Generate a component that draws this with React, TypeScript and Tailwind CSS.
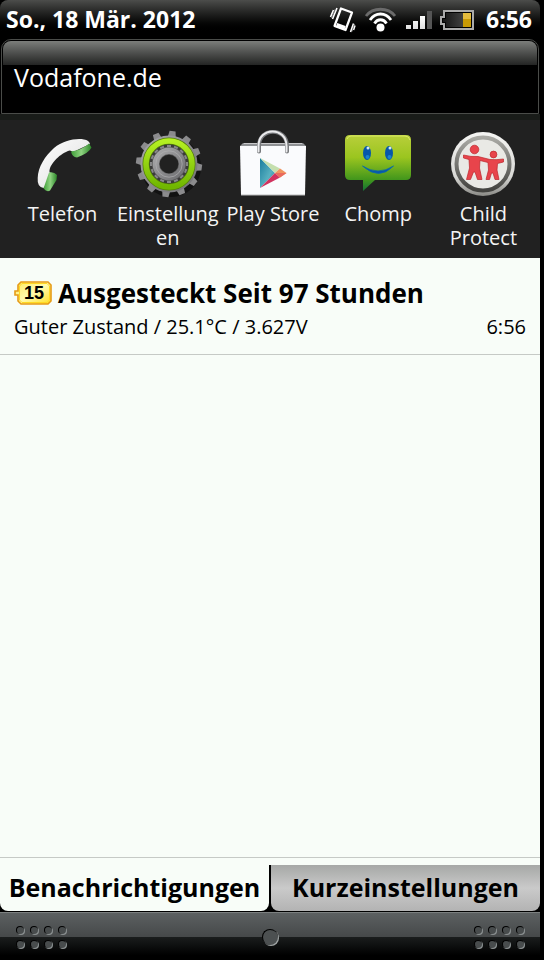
import type { ReactNode } from "react";

function VibrateIcon() {
  return (
    <svg width="28" height="28" viewBox="0 0 28 28" fill="none" stroke="#fff" aria-hidden="true">
      <path d="M13 2.500 24 6.500 17.500 24 6.500 20Z" strokeWidth="2.200" strokeLinejoin="round" />
      <path d="M8.500 19 17 22" strokeWidth="4" />
      <path d="M9 2 4.500 13M5.500 4 2.500 11M22.500 26 25.500 17.500M25.500 24 27 19.500" strokeWidth="1.600" />
      <path d="M7.300 3 3.500 12M24 25.500 26.500 18" stroke="#999" strokeWidth=".8" />
    </svg>
  );
}

function WifiIcon() {
  return (
    <svg width="32" height="28" viewBox="0 0 32 28" fill="none" strokeWidth="2.800" aria-hidden="true">
      <path d="M2 10C9 1 24 1 31 10" stroke="#6b6b6b" />
      <path d="M6 14C11.500 6 21.500 6 27 14" stroke="#fff" />
      <path d="M10.500 17.500C13.500 12.500 19.500 12.500 22.500 17.500" stroke="#fff" />
      <circle cx="16.500" cy="21.500" r="4" fill="#fff" />
    </svg>
  );
}

function SignalIcon() {
  return (
    <svg width="28" height="20" viewBox="0 0 28 20" aria-hidden="true">
      <defs>
        <linearGradient id="bars" x1="0" y1="0" x2="0" y2="1">
          <stop offset="0" stopColor="#fff" />
          <stop offset="1" stopColor="#ddd" />
        </linearGradient>
      </defs>
      <path d="M2 15h5v4H2zM9 11h5v8H9zM16 6h5v13h-5z" fill="url(#bars)" />
      <path d="M23 1h5v18h-5z" fill="#555" />
    </svg>
  );
}

function BatteryIcon() {
  return (
    <svg width="34" height="20" viewBox="0 0 34 20" aria-hidden="true">
      <defs>
        <linearGradient id="cell" x1="0" y1="0" x2="1" y2="0">
          <stop offset="0" stopColor="#111" />
          <stop offset="1" stopColor="#555" />
        </linearGradient>
      </defs>
      <path d="M4 1h29v18H4v-5H1V7h3z" fill="url(#cell)" stroke="#aaa" strokeWidth="2" />
      <path d="M5.500 2.500h26v15h-26v-5h-3v-4h3z" fill="none" stroke="#000" />
      <path d="M23 3h8v14h-8z" fill="#c89a05" />
      <path d="M23 3h8v6h-8z" fill="#e3bb3d" />
    </svg>
  );
}

function PhoneIcon() {
  return (
    <svg width="72" height="68" viewBox="0 0 72 68" aria-hidden="true">
      <defs>
        <linearGradient id="handle" x1="0" y1="0" x2="1" y2="1">
          <stop offset="0" stopColor="#fff" />
          <stop offset="1" stopColor="#dcdcdc" />
        </linearGradient>
        <linearGradient id="pad" x1="0" y1="0" x2="1" y2="0">
          <stop offset="0" stopColor="#3f9e38" />
          <stop offset=".5" stopColor="#8fd381" />
          <stop offset="1" stopColor="#2b8628" />
        </linearGradient>
      </defs>
      <path d="M16.500 58Q10 57 10.700 48C11 37 18 26 27 18 36 11 48 8 57 9.500Q62 10 63 14L46 22Q43 19 39 22C30 26 21 37 22.700 42.500L29 45Z" fill="url(#handle)" />
      <path d="M22 42.500Q27 41.500 30 45L29.500 50 23 60.500Q20 62.500 16.500 58.500Z" fill="url(#pad)" />
      <path d="M44 21.500Q55 20 62 13.500L64.500 17.500Q62 23 50 27.500Q45 27 44 21.500Z" fill="url(#pad)" />
    </svg>
  );
}

function GearIcon() {
  const teeth = Array.from({ length: 12 }, (_, i) => i * 30 + 8);
  const notches = Array.from({ length: 16 }, (_, i) => i * 22.5);
  return (
    <svg width="72" height="68" viewBox="0 0 72 68" aria-hidden="true">
      <defs>
        <linearGradient id="steel" x1="0" y1="0" x2="1" y2="1">
          <stop offset="0" stopColor="#a8a8aa" />
          <stop offset="1" stopColor="#707073" />
        </linearGradient>
        <linearGradient id="lime" x1="0" y1="0" x2="0" y2="1">
          <stop offset="0" stopColor="#b5ef22" />
          <stop offset="1" stopColor="#70b600" />
        </linearGradient>
      </defs>
      <circle cx="39" cy="37" r="30" fill="#121212" />
      {teeth.map((a) => (
        <path key={a} d="M32 7 33 1h6l1 6z" fill="#8b8b8d" transform={`rotate(${a} 37 34)`} />
      ))}
      <circle cx="37" cy="34" r="28.500" fill="url(#steel)" />
      <circle cx="37" cy="34" r="23" fill="#3a3a3a" stroke="#547f0b" strokeWidth="7" />
      <circle cx="37" cy="34" r="23" fill="none" stroke="url(#lime)" strokeWidth="5.500" />
      {notches.map((a) => (
        <path key={a} d="M35 15h4v4h-4z" fill="#88888a" transform={`rotate(${a} 37 34)`} />
      ))}
      <circle cx="37" cy="34" r="13.200" fill="#212121" stroke="#555" strokeWidth="7.800" />
      <circle cx="37" cy="34" r="13.200" fill="none" stroke="url(#steel)" strokeWidth="6.400" />
      <circle cx="37" cy="34" r="13.200" fill="none" stroke="#b0b0b2" strokeWidth=".7" />
    </svg>
  );
}

function StoreIcon() {
  return (
    <svg width="72" height="68" viewBox="0 0 72 68" aria-hidden="true">
      <defs>
        <linearGradient id="blue" x1="0" y1="0" x2="1" y2="1">
          <stop offset="0" stopColor="#197c9d" />
          <stop offset=".6" stopColor="#58b0c0" />
          <stop offset="1" stopColor="#2d7f9e" />
        </linearGradient>
      </defs>
      <path d="M6 13h60l3 3v4H3v-4z" fill="#8f9194" />
      <path d="M7 13.500h58" stroke="#c8c8ca" strokeWidth="1" />
      <path d="M3 16h66l-1 49H4z" fill="#fafbfd" />
      <path d="M4 65h64" stroke="#bbb" strokeWidth="1" />
      <path d="M22 21.500V16C22-3 50-3 50 16V21.500" fill="none" stroke="#77797c" strokeWidth="4" strokeLinecap="round" />
      <path d="M21.500 21.500V16C21.500-3.500 49.500-3.500 49.500 16V21.500" fill="none" stroke="#ececee" strokeWidth="2" strokeLinecap="round" />
      <path d="M23 28 38 43 23 58Z" fill="url(#blue)" />
      <path d="M23 28 43 38.500 38 43Z" fill="#c5dfae" />
      <path d="M23 58 38 43 43 47.500Z" fill="#d1325f" />
      <path d="M38 43 43 38.500 49.500 43 43 47.500Z" fill="#f0945f" />
      <path d="M38 43h11.500L43 47.500Z" fill="#ea6a5d" />
    </svg>
  );
}

function ChompIcon() {
  return (
    <svg width="72" height="68" viewBox="0 0 72 68" aria-hidden="true">
      <defs>
        <linearGradient id="bubble" x1="0" y1="0" x2="0" y2="1">
          <stop offset="0" stopColor="#b9cf3b" />
          <stop offset=".4" stopColor="#9bc51f" />
          <stop offset=".8" stopColor="#41961c" />
          <stop offset="1" stopColor="#147236" />
        </linearGradient>
      </defs>
      <path d="M8 5h56q5 0 5 5v35q0 5-5 5H33L21 61V50H8q-5 0-5-5V10q0-5 5-5z" fill="url(#bubble)" />
      <path d="M5 9q1-3 4-3h54q4 0 5 4" fill="none" stroke="#dce967" />
      <ellipse cx="25" cy="23" rx="4" ry="7" fill="#0757aa" />
      <ellipse cx="47" cy="23" rx="4" ry="7" fill="#0757aa" />
      <ellipse cx="25.500" cy="27" rx="2" ry="2" fill="#1b83cc" />
      <ellipse cx="47.500" cy="27" rx="2" ry="2" fill="#1b83cc" />
      <circle cx="26" cy="18" r="1.500" fill="#d5e8f0" />
      <circle cx="48" cy="18" r="1.500" fill="#d5e8f0" />
      <path d="M20.500 36Q36 46 51.500 36 37 51 20.500 36Z" fill="#0757aa" stroke="#0969a9" strokeWidth=".8" />
    </svg>
  );
}

function ChildProtectIcon() {
  return (
    <svg width="72" height="68" viewBox="0 0 72 68" aria-hidden="true">
      <defs>
        <linearGradient id="rim" x1="0" y1="0" x2="0" y2="1">
          <stop offset="0" stopColor="#f5f5f3" />
          <stop offset=".7" stopColor="#d8d8d5" />
          <stop offset="1" stopColor="#898985" />
        </linearGradient>
        <linearGradient id="band" x1="0" y1="0" x2="0" y2="1">
          <stop offset="0" stopColor="#aaaaa5" />
          <stop offset="1" stopColor="#42423f" />
        </linearGradient>
      </defs>
      <circle cx="36" cy="34" r="32" fill="url(#rim)" />
      <circle cx="36" cy="34" r="26.500" fill="#e9e9e5" stroke="url(#band)" strokeWidth="4" />
      <g fill="#e8444b" stroke="#bc252b" strokeWidth=".7" strokeLinejoin="round">
        <circle cx="27.500" cy="19.500" r="4.300" />
        <circle cx="46.500" cy="24.500" r="3.400" />
        <path d="M16.500 25Q24 27 31 26.500L43 29.500Q50 30 56.500 29V32L50.500 33.500 50 40 52 49.500H48L46 43 44.500 43 42.500 49.500H39L41.500 40 41 32.500 33 30.500 32.500 38 35 49.500H30.500L28 42 26.500 42 23.500 49.500H19.500L22.500 38 22 29.500 16.500 28Z" />
      </g>
    </svg>
  );
}

function BatteryBadge() {
  return (
    <svg width="38" height="24" viewBox="0 0 38 24" className="shrink-0" role="img" aria-label="15">
      <defs>
        <linearGradient id="badge" x1="0" y1="0" x2="1" y2="1">
          <stop offset="0" stopColor="#ffe860" />
          <stop offset=".5" stopColor="#fffbb0" />
          <stop offset="1" stopColor="#ffdf20" />
        </linearGradient>
      </defs>
      <path d="M1 10h3V4l3-3h27l3 3v16l-3 3H7l-3-3v-6H1z" fill="url(#badge)" stroke="#e69b16" strokeWidth="1.600" />
      <path d="M5.500 5 8 2.500h25L35.500 5v14L33 21.500H8L5.500 19z" fill="none" stroke="#ffd923" />
      <text x="20" y="18" textAnchor="middle" fontSize="18" fontWeight="700" fontFamily="Liberation Sans, Arial, sans-serif">15</text>
    </svg>
  );
}

function AppShortcut({ icon, label }: { icon: ReactNode; label: string }) {
  return (
    <button type="button" className="flex min-w-0 flex-1 flex-col items-center pt-2.5">
      {icon}
      <span className="mt-1 w-full text-center text-[20px] leading-6 break-words text-[#f4f4f4]">{label}</span>
    </button>
  );
}

function Grip() {
  return (
    <div className="grid grid-cols-4 gap-1.5" aria-hidden="true">
      {Array.from({ length: 8 }, (_, i) => (
        <span key={i} className="size-2 rounded-full border-t border-l border-black bg-[#484c4d] shadow-[1px_1px_0_#8b9091]" />
      ))}
    </div>
  );
}

export default function App() {
  return (
    <div className="min-h-screen bg-black pr-1 font-['Open_Sans','Noto_Sans',sans-serif]">
      <div className="flex min-h-screen flex-col bg-black">
        <header className="flex h-[39px] items-center rounded-t-lg bg-linear-to-b from-[#4c4d4b] to-black to-85% pr-2 pl-1.5 text-[23px] font-bold text-white">
          <span className="flex-1">So., 18 Mär. 2012</span>
          <div className="flex items-center gap-2">
            <VibrateIcon />
            <WifiIcon />
            <SignalIcon />
            <BatteryIcon />
            <span className="pl-1">6:56</span>
          </div>
        </header>

        <section className="mx-px h-[75px] rounded-t-[10px] border border-[#4a4c49] bg-black p-px">
          <div className="h-6 rounded-t-lg bg-linear-to-b from-[#7c7e7b] to-[#242524]" />
          <p className="px-[11px] text-[25px] leading-6 text-white">Vodafone.de</p>
        </section>
        <div className="h-1.5 bg-[#191c19]" />

        <nav className="flex h-[138px] bg-[#212121] pr-1 pl-2.5" aria-label="Apps">
          <AppShortcut icon={<PhoneIcon />} label="Telefon" />
          <AppShortcut icon={<GearIcon />} label="Einstellungen" />
          <AppShortcut icon={<StoreIcon />} label="Play Store" />
          <AppShortcut icon={<ChompIcon />} label="Chomp" />
          <AppShortcut icon={<ChildProtectIcon />} label="Child Protect" />
        </nav>

        <main className="flex flex-1 flex-col bg-[#f8fdf8] text-black">
          <article className="h-[97px] border-b border-[#c6cac6] px-3.5 pt-[19px]">
            <div className="flex items-center gap-1.5">
              <BatteryBadge />
              <h1 className="text-[26px] leading-8 font-bold whitespace-nowrap">Ausgesteckt Seit 97 Stunden</h1>
            </div>
            <div className="flex justify-between text-[20px] leading-9 whitespace-nowrap">
              <p>Guter Zustand / 25.1°C / 3.627V</p>
              <time>6:56</time>
            </div>
          </article>
          <div className="flex-1" />
          <div className="h-2 border-t border-[#c6cac6]" />
        </main>

        <div className="flex h-[47px] gap-0.5 bg-black text-[25px] font-bold text-black" role="tablist">
          <button type="button" role="tab" aria-selected="true" className="mb-px min-w-0 flex-1 rounded-b-lg bg-[#f8fdf8]">
            Benachrichtigungen
          </button>
          <button type="button" role="tab" aria-selected="false" className="mb-px min-w-0 flex-1 rounded-b-lg bg-linear-to-b from-[#a6a8a6] via-[#cacaca] to-[#b3b3b3]">
            Kurzeinstellungen
          </button>
        </div>

        <footer className="flex h-12 items-center justify-between border-t border-[#7c8080] bg-[linear-gradient(#5c6061_0%,#46494a_50%,#1b1e1e_50%,#000_90%)] px-4">
          <Grip />
          <span className="size-4 rounded-full border-t border-l border-black bg-[#4c5051] shadow-[1px_1px_0_#a0a5a5]" />
          <Grip />
        </footer>
      </div>
    </div>
  );
}
